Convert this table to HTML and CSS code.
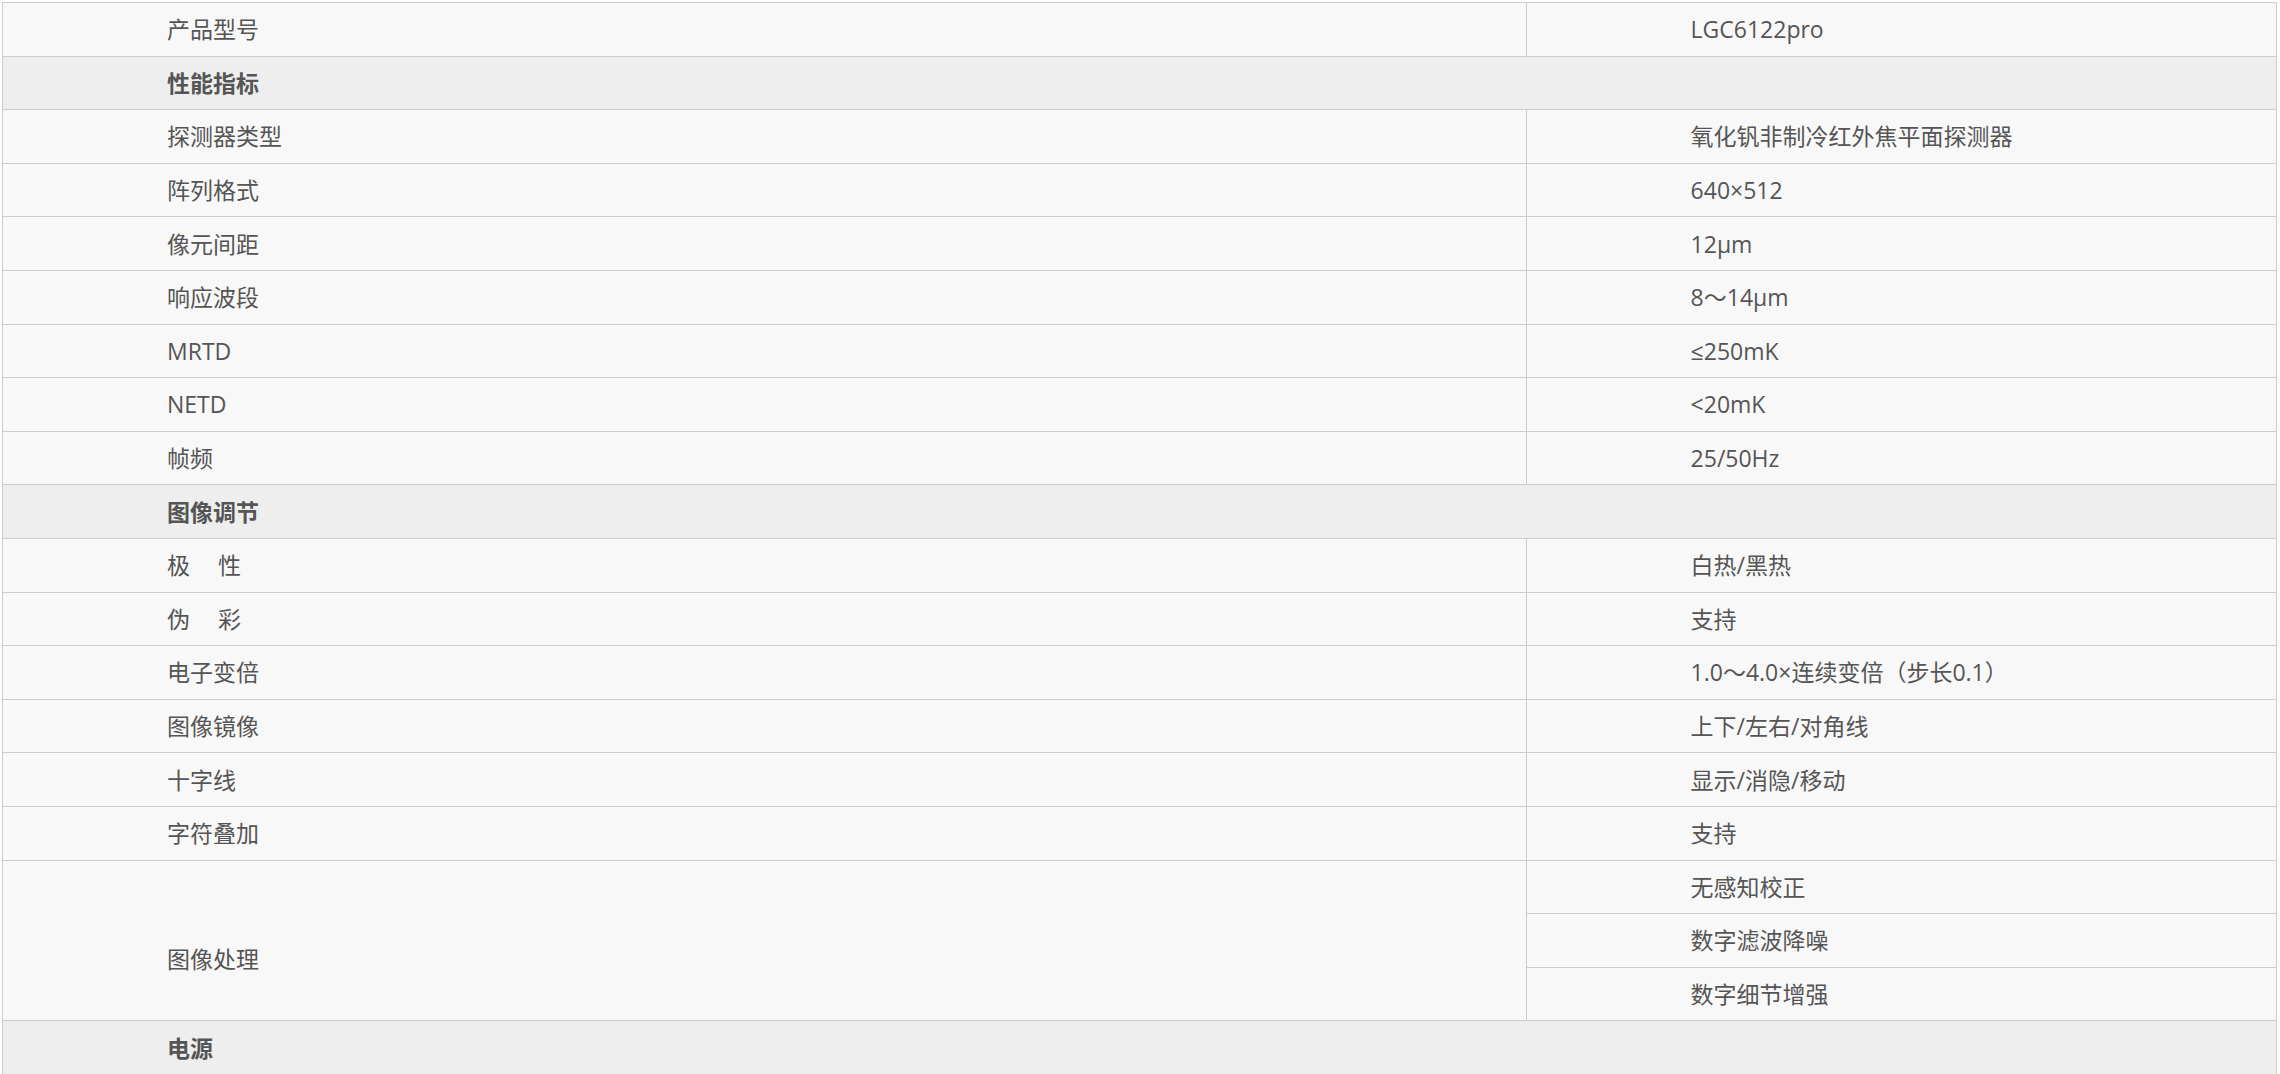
FILE: index.html
```html
<!DOCTYPE html>
<html lang="zh-CN">
<head>
<meta charset="utf-8">
<title>产品参数</title>
<link rel="stylesheet" href="styles.css">
</head>
<body>
<table class="spec">
  <colgroup><col class="c-label"><col class="c-value"></colgroup>
  <tbody>
    <tr><td>产品型号</td><td>LGC6122pro</td></tr>
    <tr class="group"><td colspan="2">性能指标</td></tr>
    <tr><td>探测器类型</td><td>氧化钒非制冷红外焦平面探测器</td></tr>
    <tr><td>阵列格式</td><td>640×512</td></tr>
    <tr><td>像元间距</td><td>12μm</td></tr>
    <tr><td>响应波段</td><td>8～14μm</td></tr>
    <tr><td>MRTD</td><td>≤250mK</td></tr>
    <tr><td>NETD</td><td>&lt;20mK</td></tr>
    <tr><td>帧频</td><td>25/50Hz</td></tr>
    <tr class="group"><td colspan="2">图像调节</td></tr>
    <tr><td>极<span class="gap"></span>性</td><td>白热/黑热</td></tr>
    <tr><td>伪<span class="gap"></span>彩</td><td>支持</td></tr>
    <tr><td>电子变倍</td><td>1.0～4.0×连续变倍（步长0.1）</td></tr>
    <tr><td>图像镜像</td><td>上下/左右/对角线</td></tr>
    <tr><td>十字线</td><td>显示/消隐/移动</td></tr>
    <tr><td>字符叠加</td><td>支持</td></tr>
    <tr><td rowspan="3" class="multi">图像处理</td><td>无感知校正</td></tr>
    <tr><td>数字滤波降噪</td></tr>
    <tr><td>数字细节增强</td></tr>
    <tr class="group"><td colspan="2">电源</td></tr>
  </tbody>
</table>
</body>
</html>
```

FILE: styles.css
```css
html, body {
  margin: 0;
  padding: 0;
  background: #ffffff;
}
body {
  padding: 2px 3px 0 2px;
  font-family: "Open Sans", "Noto Sans CJK SC", sans-serif;
  font-size: 23px;
  color: #555555;
}
.spec {
  width: 100%;
  border-collapse: collapse;
  table-layout: fixed;
  background: #f8f8f8;
}
.c-label { width: 67%; }
.c-value { width: 33%; }
.spec td {
  border: 1px solid #cccccc;
  padding: 0 0 0 164px;
  height: 52.6px;
  line-height: 30px;
  vertical-align: middle;
  white-space: nowrap;
}
.spec td.multi {
  padding-top: 38px;
}
.spec tr.group td {
  background: #eeeeee;
  font-weight: bold;
}
.gap {
  display: inline-block;
  width: 28px;
}
```
